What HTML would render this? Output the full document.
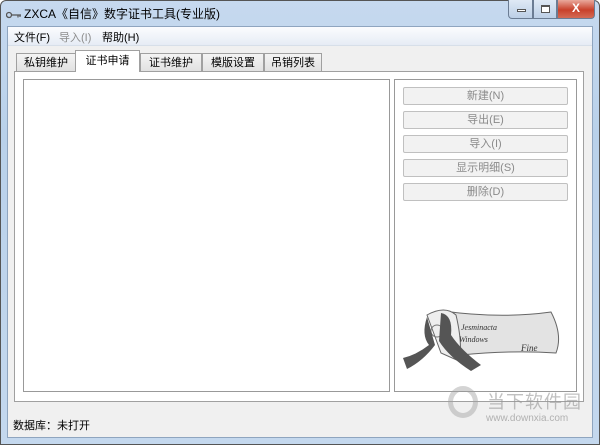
<!DOCTYPE html><html><head><meta charset="utf-8"><style>
*{margin:0;padding:0;box-sizing:border-box}
body{width:600px;height:445px;overflow:hidden;background:#fff;font-family:"Liberation Sans","Noto Sans CJK SC",sans-serif;font-size:12px;color:#000;position:relative}
.frame{position:absolute;left:0;top:0;width:600px;height:445px;background:linear-gradient(#c6d9ef,#b9d1ea 30%,#c4d8ee);border:1px solid #555;border-radius:6px 6px 0 0}
.title{position:absolute;left:24px;top:5px;font-size:12px;color:#000}
.client{position:absolute;left:7px;top:26px;width:586px;height:412px;background:#f0f0f0;border:1px solid #8fa5bf}
.menu{position:absolute;left:0;top:0;width:584px;height:19px;background:linear-gradient(#fbfcfe,#e6ecf5);border-bottom:1px solid #d7dfe9}
.menu span{position:absolute;top:2px;font-size:11px}
.tab{position:absolute;top:26px;height:18px;border:1px solid #a0a0a0;border-bottom:none;background:linear-gradient(#f4f4f4,#e1e1e1);font-size:11px;text-align:center;line-height:18px}
.tab.on{top:23px;height:22px;line-height:20px;background:#fff;z-index:2}
.panel{position:absolute;left:6px;top:44px;width:570px;height:331px;border:1px solid #a0a0a0;background:#fff}
.box{position:absolute;border:1px solid #999;background:#fff}
.btn{position:absolute;left:8px;width:165px;height:18px;border:1px solid #c0c0c0;border-radius:2px;background:#f2f2f2;color:#8a8a8a;font-size:11px;text-align:center;line-height:16px}
.cb{position:absolute;top:0;height:19px;border:1px solid #6b7c93;border-top:none}
</style></head><body>
<div class="frame"></div>
<div style="position:absolute;left:6px;top:8px;width:16px;height:6px">
<svg width="16" height="8"><circle cx="3" cy="4" r="2.5" fill="none" stroke="#555" stroke-width="1.3"/><path d="M5.5 4H15M12 4v2.5M14 4v2" stroke="#555" stroke-width="1.2"/></svg></div>
<div class="title">ZXCA《自信》数字证书工具(专业版)</div>
<div class="cb" style="left:508px;width:25px;border-radius:0 0 0 4px;background:linear-gradient(#dfe9f5,#bccfe6)"><div style="position:absolute;left:8px;top:9px;width:9px;height:3px;border:1px solid #555;background:#fff"></div></div>
<div class="cb" style="left:533px;width:24px;background:linear-gradient(#dfe9f5,#bccfe6)"><div style="position:absolute;left:7px;top:5px;width:9px;height:8px;border:1px solid #555;border-top-width:2px;background:#fff"></div></div>
<div class="cb" style="left:557px;width:38px;border-radius:0 0 4px 0;background:linear-gradient(#e9a99c,#c8412b 55%,#d46b55);color:#fff;text-align:center;font-weight:bold;font-size:12px;line-height:16px">X</div>
<div class="client">
<div class="menu"><span style="left:6px">文件(F)</span><span style="left:51px;color:#8d8d8d">导入(I)</span><span style="left:94px">帮助(H)</span></div>
<div class="tab" style="left:8px;width:60px">私钥维护</div>
<div class="tab on" style="left:67px;width:65px">证书申请</div>
<div class="tab" style="left:132px;width:62px">证书维护</div>
<div class="tab" style="left:194px;width:62px">模版设置</div>
<div class="tab" style="left:256px;width:58px">吊销列表</div>
<div class="panel">
<div class="box" style="left:8px;top:7px;width:367px;height:313px"></div>
<div class="box" style="left:379px;top:7px;width:183px;height:313px">
<div class="btn" style="top:7px">新建(N)</div>
<div class="btn" style="top:31px">导出(E)</div>
<div class="btn" style="top:55px">导入(I)</div>
<div class="btn" style="top:79px">显示明细(S)</div>
<div class="btn" style="top:103px">删除(D)</div>
<svg style="position:absolute;left:6px;top:225px" width="170" height="70">
<path d="M42 6 Q100 14 150 7 Q162 30 155 48 Q110 45 60 50 Z" fill="#e3e3e3" stroke="#666"/>
<path d="M26 10 Q44 0 55 10 Q62 40 58 56 L40 48 Z" fill="#eee" stroke="#666"/>
<circle cx="36" cy="26" r="6" fill="none" stroke="#777"/>
<path d="M40 8 Q52 10 50 30 Q60 45 80 60 L70 66 Q48 52 38 36 Z" fill="#555"/>
<path d="M26 12 Q20 30 28 40 Q15 50 2 53 L6 64 Q22 56 34 40 Z" fill="#555"/>
<text x="60" y="25" font-size="8" font-style="italic" fill="#333" font-family="Liberation Serif">Jesminacta</text>
<text x="58" y="37" font-size="8" font-style="italic" fill="#333" font-family="Liberation Serif">Windows</text>
<text x="120" y="46" font-size="9" font-style="italic" fill="#333" font-family="Liberation Serif">Fine</text>
</svg>
</div>
</div>
<div style="position:absolute;left:5px;top:390px;font-size:11px">数据库：未打开</div>
</div>
<div style="position:absolute;left:448px;top:386px;width:30px;height:32px;border:5px solid rgba(160,160,160,.45);border-radius:50%"></div>
<div style="position:absolute;left:487px;top:388px;font-size:18px;color:rgba(150,150,150,.6);letter-spacing:1px">当下软件园</div>
<div style="position:absolute;left:486px;top:413px;font-size:10px;color:rgba(150,150,150,.7)">www.downxia.com</div>
</body></html>
